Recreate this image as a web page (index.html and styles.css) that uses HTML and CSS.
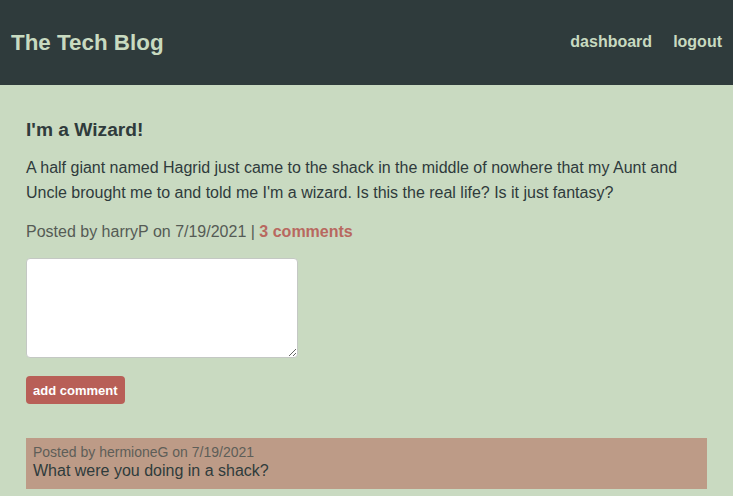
FILE: index.html
```html
<!DOCTYPE html>
<html lang="en">
<head>
<meta charset="utf-8">
<title>The Tech Blog</title>
<link rel="stylesheet" href="styles.css">
</head>
<body>
<header class="site-header">
  <a class="brand" href="#">The Tech Blog</a>
  <nav class="nav">
    <a href="#">dashboard</a>
    <a href="#">logout</a>
  </nav>
</header>
<main class="main">
  <article class="post">
    <h3 class="post-title">I'm a Wizard!</h3>
    <p class="post-body">A half giant named Hagrid just came to the shack in the middle of nowhere that my Aunt and Uncle brought me to and told me I'm a wizard. Is this the real life? Is it just fantasy?</p>
    <p class="post-meta">Posted by harryP on 7/19/2021 | <a class="comments-link" href="#">3 comments</a></p>
  </article>
  <form class="comment-form">
    <textarea class="comment-input"></textarea>
    <button class="btn" type="button">add comment</button>
  </form>
  <div class="comment">
    <p class="comment-meta">Posted by hermioneG on 7/19/2021</p>
    <p class="comment-text">What were you doing in a shack?</p>
  </div>
</main>
</body>
</html>
```

FILE: styles.css
```css
* { box-sizing: border-box; }

html, body {
  margin: 0;
  padding: 0;
}

body {
  background: #c9dac1;
  font-family: "Liberation Sans", Arial, Helvetica, sans-serif;
  color: #2f3b3c;
  min-height: 496px;
}

.site-header {
  height: 85px;
  background: #2f3b3c;
  display: flex;
  align-items: center;
  justify-content: space-between;
  padding: 0 11px;
}

.brand {
  color: #c8dac0;
  text-decoration: none;
  font-weight: bold;
  font-size: 22.4px;
  margin-top: 0;
}

.nav {
  display: flex;
  gap: 21px;
  margin-top: -1px;
}

.nav a {
  color: #c8dac0;
  text-decoration: none;
  font-weight: bold;
  font-size: 16px;
}

.main {
  padding: 34px 26px 0;
}

.post-title {
  margin: 0;
  font-size: 19.2px;
  font-weight: bold;
  color: #2f3b3c;
}

.post-body {
  margin: 14px 0 0;
  font-size: 16px;
  line-height: 25px;
  color: #2f3b3c;
}

.post-meta {
  margin: 14px 0 0;
  font-size: 16px;
  line-height: 25px;
  color: #555b55;
}

.comments-link {
  color: #b8685f;
  font-weight: bold;
  text-decoration: none;
}

.comment-form {
  display: flex;
  flex-direction: column;
  align-items: flex-start;
  margin-top: 14px;
}

.comment-input {
  width: 272px;
  height: 100px;
  background: #fff;
  border: 1px solid #c4c8c4;
  border-radius: 4px;
  resize: vertical;
}

.btn {
  margin-top: 18px;
  background: #b85f57;
  color: #fff;
  border: none;
  border-radius: 4px;
  font-family: "Liberation Sans", Arial, sans-serif;
  font-weight: bold;
  font-size: 13px;
  height: 28px;
  padding: 0 7px;
}

.comment {
  margin-top: 34px;
  background: #bd9b87;
  padding: 5px 7px 6px;
  height: 51px;
}

.comment-meta {
  margin: 0;
  font-size: 14px;
  line-height: 18px;
  color: #5e5e58;
}

.comment-text {
  margin: 0;
  font-size: 16px;
  line-height: 20px;
  color: #2f3b3c;
}
```
